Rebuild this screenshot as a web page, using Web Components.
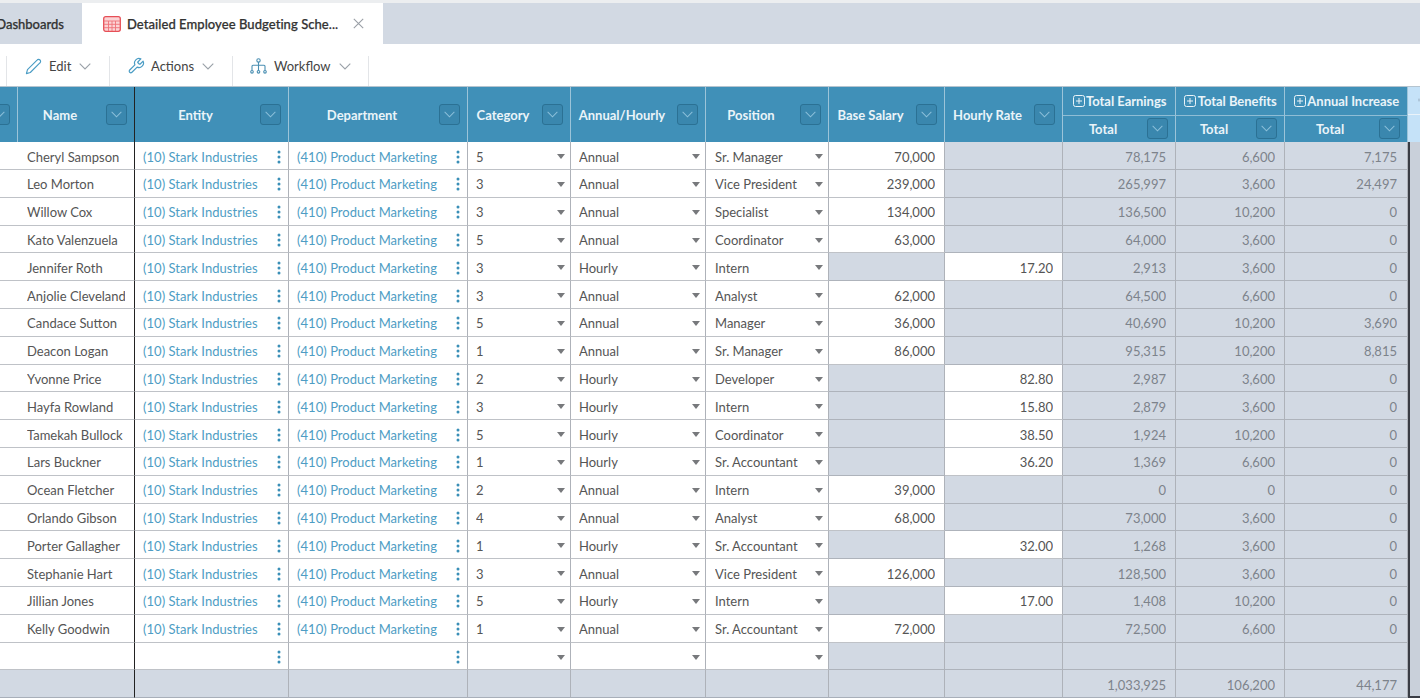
<!DOCTYPE html>
<html><head><meta charset="utf-8"><title>Budgeting</title>
<style>
html,body{margin:0;padding:0;height:100%;overflow:hidden;background:#fff;font-family:Lato,"Liberation Sans",sans-serif}
body{display:flex;flex-direction:column;width:1420px;height:700px}
</style></head><body>
<app-tabs>
  <app-tab slot="tabs" kind="side" style="width:82px">Dashboards</app-tab>
  <app-tab slot="tabs" kind="active" style="width:301px">Detailed Employee Budgeting Sche...</app-tab>
</app-tabs>
<app-toolbar>
  <tool-button icon="edit" style="width:103px;padding-left:18px">Edit</tool-button>
  <tool-button icon="actions" style="width:123px;padding-left:17px">Actions</tool-button>
  <tool-button icon="workflow" style="width:137px;padding-left:17px">Workflow</tool-button>
</app-toolbar>
<data-grid></data-grid>
<script>
const chevron = (c, s) => `<svg width="${s}" height="${Math.round(s*0.6)}" viewBox="0 0 12 7" fill="none" stroke="${c}" stroke-width="1.1"><path d="M.7.7 6 6 11.3.7"/></svg>`;

class AppTabs extends HTMLElement{
  constructor(){super();this.attachShadow({mode:'open'}).innerHTML=`<style>
  :host{display:flex;flex:none;height:44px;box-sizing:border-box;border-top:3px solid #eceef0;background:#d2d9e3}
  </style><slot name="tabs"></slot>`;}
}
class AppTab extends HTMLElement{
  constructor(){super();const k=this.getAttribute('kind');
  const active=k==='active';
  this.attachShadow({mode:'open'}).innerHTML=`<style>
  :host{display:flex;align-items:center;flex:none;height:100%;box-sizing:border-box;overflow:hidden;font-size:13px;color:#333;white-space:nowrap;
    justify-content:${active?'flex-start':'flex-end'};padding:${active?'0 0 0 21px':'0 18px 0 0'};background:${active?'#fff':'#d2d9e3'}}
  .ic{margin-right:6px;flex:none;display:block}
  .x{margin-left:15px;flex:none;display:block}
  span{font-weight:500;-webkit-text-stroke:.25px #333;letter-spacing:${active?'.06px':'0'}}
  </style>${active?`<svg class="ic" width="18" height="16" viewBox="0 0 18 16"><rect x=".7" y=".7" width="16.6" height="14.6" rx="2" fill="#fbd3d5" stroke="#e64f57" stroke-width="1.3"/><path d="M1 5h16M1 8.3h16M1 11.7h16M5.5 5v10M9 5v10M12.5 5v10" stroke="#ee7278" stroke-width=".9"/></svg>`:''}<span><slot></slot></span>${active?`<svg class="x" width="11" height="11" viewBox="0 0 11 11" stroke="#9a9fa6" stroke-width="1.1"><path d="M.8.8l9.4 9.4M10.2.8.8 10.2"/></svg>`:''}`;}
}
class AppToolbar extends HTMLElement{
  constructor(){super();this.attachShadow({mode:'open'}).innerHTML=`<style>
  :host{display:flex;flex:none;height:42px;box-sizing:border-box;padding:12px 0 0 6px;background:#fff}
  </style><slot></slot>`;}
}
const TOOL_ICONS={
 edit:`<svg width="17" height="17" viewBox="0 0 24 24" fill="none" stroke="#4a9cc4" stroke-width="1.6" stroke-linejoin="round"><path d="M17 3a2.85 2.83 0 1 1 4 4L7.500 20.500 2 22l1.500-5.500Z"/></svg>`,
 actions:`<svg width="18" height="18" viewBox="0 0 24 24" fill="none" stroke="#4a9cc4" stroke-width="1.6" stroke-linejoin="round"><path d="M14.7 6.3a1 1 0 0 0 0 1.4l1.6 1.6a1 1 0 0 0 1.4 0l3.77-3.77a6 6 0 0 1-7.94 7.94l-6.91 6.91a2.12 2.12 0 0 1-3-3l6.91-6.91a6 6 0 0 1 7.94-7.94l-3.76 3.76z"/></svg>`,
 workflow:`<svg width="17" height="16" viewBox="0 0 17 16" fill="none" stroke="#4a8fb2" stroke-width="1.1"><circle cx="8.5" cy="2.4" r="1.7"/><path d="M8.5 4v9M2 12.5V8.2q0-1 1-1h11q1 0 1 1v4.300"/><circle cx="2" cy="13.800" r="1.300"/><circle cx="8.500" cy="13.800" r="1.300"/><circle cx="15" cy="13.800" r="1.300"/></svg>`};
class ToolButton extends HTMLElement{
  constructor(){super();this.attachShadow({mode:'open'}).innerHTML=`<style>
  :host{display:flex;align-items:center;flex:none;box-sizing:border-box;height:30px;border-left:1px solid #e3e5e8;font-size:13px;color:#444;padding-bottom:10px}
  :host(:last-child){border-right:1px solid #e3e5e8}
  .i{display:flex;width:24px;flex:none}
  .c{margin-left:8px;display:flex}
  </style><span class="i">${TOOL_ICONS[this.getAttribute('icon')]}</span><slot></slot><span class="c">${chevron('#9aa1a8',12)}</span>`;}
}
class GridHead extends HTMLElement{
  constructor(){super();const h=this.hasAttribute('nobtn'),p=this.hasAttribute('plus');
  this.attachShadow({mode:'open'}).innerHTML=`<style>
  :host{display:flex;align-items:center;box-sizing:border-box;background:#4090b8;color:#eaf4f9;font-size:13px;font-weight:700;border-right:1px solid #9cc4d9;white-space:nowrap;overflow:hidden;min-width:0}
  :host([sub]){border-top:1px solid #8fbdd5}
  .t{flex:1;display:flex;align-items:center;justify-content:center;gap:1.5px;min-width:0;padding-right:4px}
  :host([nobtn]) .t{padding:0 0 0 1px;letter-spacing:-.03px}
  .b{flex:none;box-sizing:border-box;width:21px;height:21px;border:1px solid #2b7194;border-radius:3px;background:#3a87ae;display:flex;align-items:center;justify-content:center;margin-right:7px}
  svg.p{display:block;flex:none}
  </style><span class="t">${p?`<svg class="p" width="12" height="12" viewBox="0 0 12 12" fill="none" stroke="#eaf4f9"><rect x=".5" y=".5" width="11" height="11" rx="2"/><path d="M3 6h6M6 3v6"/></svg>`:''}<slot></slot></span>${h?'':`<span class="b">${chevron('#8cc0da',11)}</span>`}`;}
}
class GridCell extends HTMLElement{
  constructor(){super();const k=this.getAttribute('kind');
  const tail=k==='link'?`<svg width="4" height="14" viewBox="0 0 4 14" fill="#3a8fb7"><circle cx="2" cy="2" r="1.500"/><circle cx="2" cy="7" r="1.500"/><circle cx="2" cy="12" r="1.500"/></svg>`
   :k==='select'?`<svg width="8" height="5" viewBox="0 0 8 5" fill="#77797c"><path d="M0 0h8L4 5z"/></svg>`:'';
  this.attachShadow({mode:'open'}).innerHTML=`<style>
  :host{display:flex;align-items:center;box-sizing:border-box;min-width:0;font-size:13px;color:#555;background:#fff;border-right:1px solid #aeb2b9;border-bottom:1px solid #bfc2c7;white-space:nowrap;overflow:hidden;padding:2px 9px 0 9px}
  :host([kind=link]){color:#4e9dc4;padding:2px 7px 0 8px;letter-spacing:.04px}
  :host([kind=select]){padding:2px 5px 0 8px}
  :host([pos]){padding-left:9px}
  :host([kind=num]){justify-content:flex-end}
  :host([tight]){padding-right:10px}
  :host([grey]){background:#d2d9e3;color:#7d838b;border-bottom-color:#aeb3bb;}
  :host([black]){border-right:1px solid #222}
  :host([last]){background:#c9d0da;border-right:0;border-left:2px solid #3a3d45;border-bottom:0}
  :host([foot]){border-bottom:1px solid #a8afb9}
  :host([foot][last]){border-bottom:2px solid #3a3d45}
  .s{flex:1;min-width:0;overflow:hidden}
  svg{flex:none;display:block}
  :host([kind=num]) .s{flex:none}
  </style><span class="s"><slot></slot></span>${tail}`;}
}
const ROWS=`Cheryl Sampson|5|Annual|Sr. Manager|70,000||78,175|6,600|7,175
Leo Morton|3|Annual|Vice President|239,000||265,997|3,600|24,497
Willow Cox|3|Annual|Specialist|134,000||136,500|10,200|0
Kato Valenzuela|5|Annual|Coordinator|63,000||64,000|3,600|0
Jennifer Roth|3|Hourly|Intern||17.20|2,913|3,600|0
Anjolie Cleveland|3|Annual|Analyst|62,000||64,500|6,600|0
Candace Sutton|5|Annual|Manager|36,000||40,690|10,200|3,690
Deacon Logan|1|Annual|Sr. Manager|86,000||95,315|10,200|8,815
Yvonne Price|2|Hourly|Developer||82.80|2,987|3,600|0
Hayfa Rowland|3|Hourly|Intern||15.80|2,879|3,600|0
Tamekah Bullock|5|Hourly|Coordinator||38.50|1,924|10,200|0
Lars Buckner|1|Hourly|Sr. Accountant||36.20|1,369|6,600|0
Ocean Fletcher|2|Annual|Intern|39,000||0|0|0
Orlando Gibson|4|Annual|Analyst|68,000||73,000|3,600|0
Porter Gallagher|1|Hourly|Sr. Accountant||32.00|1,268|3,600|0
Stephanie Hart|3|Annual|Vice President|126,000||128,500|3,600|0
Jillian Jones|5|Hourly|Intern||17.00|1,408|10,200|0
Kelly Goodwin|1|Annual|Sr. Accountant|72,000||72,500|6,600|0`.split('\n').map(r=>r.split('|'));
class DataGrid extends HTMLElement{
  constructor(){super();const root=this.attachShadow({mode:'open'});
  const head=(t,col,attrs='')=>`<grid-head style="grid-column:${col};grid-row:1/span 2" ${attrs}>${t}</grid-head>`;
  let h=`<grid-head style="grid-column:1;grid-row:1/span 2;margin-left:-17px"></grid-head>`;
  [['Name',2],['Entity',3],['Department',4],['Category',5],['Annual/Hourly',6],['Position',7],['Base Salary',8],['Hourly Rate',9]].forEach(([t,c])=>h+=head(t,c,c===2?'style2':''));
  [['Total Earnings',10],['Total Benefits',11],['Annual Increase',12]].forEach(([t,c])=>{
    h+=`<grid-head nobtn plus style="grid-column:${c};grid-row:1">${t}</grid-head><grid-head sub style="grid-column:${c};grid-row:2">Total</grid-head>`;
  });
  h+=`<div class="lb" style="grid-column:13;grid-row:1"><svg width="12" height="12" viewBox="0 0 12 12" fill="none" stroke="#333"><rect x=".5" y=".5" width="11" height="11" rx="2"/></svg></div><div class="lb lb2" style="grid-column:13;grid-row:2"></div>`;
  const cell=(t,attrs='')=>`<grid-cell ${attrs}>${t}</grid-cell>`;
  ROWS.forEach(r=>{
    const [n,c,a,p,b,hr,te,tb,ai]=r;
    h+=cell('')+cell(n,'black')+cell('(10) Stark Industries','kind="link"')+cell('(410) Product Marketing','kind="link"')
      +cell(c,'kind="select"')+cell(a,'kind="select"')+cell(p,'kind="select" pos')
      +cell(b,b?'kind="num"':'kind="num" grey')+cell(hr,hr?'kind="num"':'kind="num" grey')
      +cell(te,'kind="num" grey')+cell(tb,'kind="num" grey')+cell(ai,'kind="num" grey tight')+cell('','last');
  });
  h+=cell('')+cell('','black')+cell('','kind="link"')+cell('','kind="link"')+cell('','kind="select"')+cell('','kind="select"')+cell('','kind="select"')
    +cell('','kind="num" grey')+cell('','kind="num" grey')+cell('','kind="num" grey')+cell('','kind="num" grey')+cell('','kind="num" grey')+cell('','last');
  h+=cell('','grey foot')+cell('','grey foot black')+cell('','grey foot')+cell('','grey foot')+cell('','grey foot')+cell('','grey foot')+cell('','grey foot')
    +cell('','grey foot')+cell('','grey foot')+cell('1,033,925','kind="num" grey foot')+cell('106,200','kind="num" grey foot')+cell('44,177','kind="num" grey foot tight')+cell('','last foot');
  root.innerHTML=`<style>
  :host{display:grid;flex:none;width:1420px;box-sizing:border-box;border-top:1px solid #b5c4cf;
   grid-template-columns:18px 117px 154px 179px 103px 135px 123px 116px 118px 113px 109px 123px 12px;
   grid-template-rows:27.5px 27.8px repeat(20,27.8px)}
  .lb{background:#c5e2f8;display:flex;align-items:center;padding-left:10px;box-sizing:border-box;overflow:hidden;border-bottom:1px solid #eaf3fa}
  .lb2{border-bottom:0}
  grid-head[style2]{border-right-color:#222}
  </style>${h}`;}
}
customElements.define('app-tabs',AppTabs);
customElements.define('app-tab',AppTab);
customElements.define('app-toolbar',AppToolbar);
customElements.define('tool-button',ToolButton);
customElements.define('grid-head',GridHead);
customElements.define('grid-cell',GridCell);
customElements.define('data-grid',DataGrid);
</script>
</body></html>
